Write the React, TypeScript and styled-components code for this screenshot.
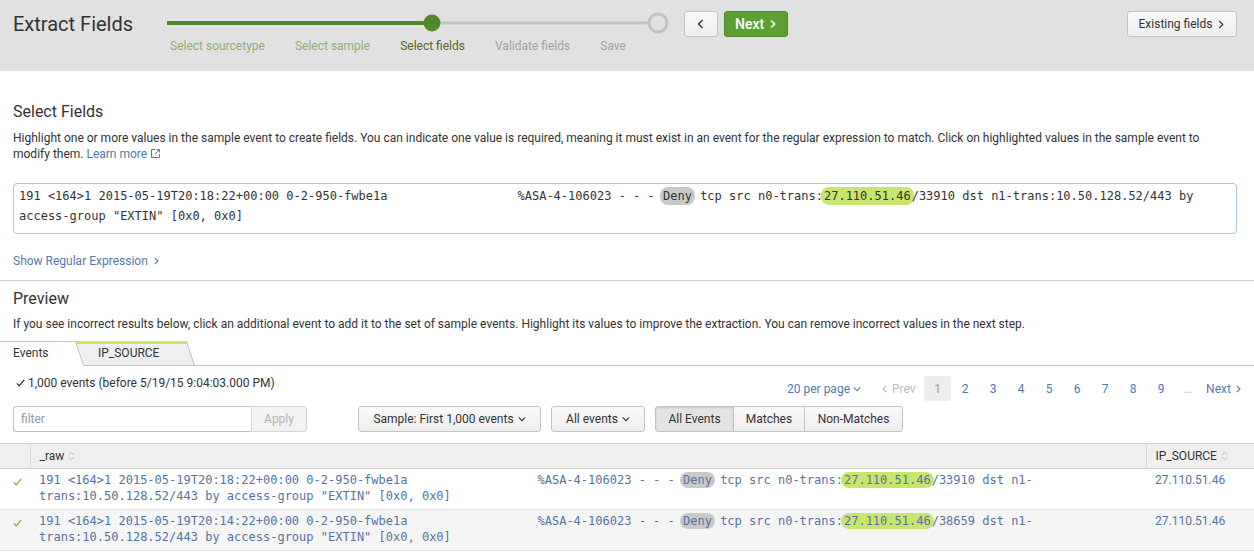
import React from 'react';
import styled, { createGlobalStyle, css } from 'styled-components';

const GlobalStyle = createGlobalStyle`
  html, body { margin: 0; padding: 0; background: #fff; }
  body {
    font-family: Roboto, "Liberation Sans", Arial, sans-serif;
    font-size: 12px;
    color: #333;
  }
  * { box-sizing: border-box; }
`;

const BLUE = '#5379af';
const MONO = '"DejaVu Sans Mono", "Liberation Mono", monospace';

const Header = styled.header`
  display: flex;
  align-items: flex-start;
  height: 71px;
  padding: 11px 17px 0 13px;
  background: #e1e1e1;
`;
const Title = styled.h1`
  flex: none;
  width: 154px;
  margin: 0;
  font-size: 20px;
  font-weight: 400;
  line-height: 26px;
  color: #333;
`;
const Stepper = styled.div`
  flex: none;
  width: 503px;
  display: flex;
  flex-direction: column;
`;
const StepLabels = styled.div`
  display: flex;
  gap: 30px;
  padding-left: 3px;
  margin-top: 4px;
`;
const StepLabel = styled.span<{ state: 'done' | 'current' | 'todo' }>`
  font-size: 12px;
  line-height: 14px;
  color: ${({ state }) =>
    state === 'done' ? '#8fae7c' : state === 'current' ? '#56652f' : '#a3a3a3'};
`;
const NavGroup = styled.div`
  display: flex;
  gap: 6px;
  margin-left: 14px;
`;
const Button = styled.button<{ primary?: boolean; w?: number; pressed?: boolean }>`
  display: inline-flex;
  align-items: center;
  justify-content: center;
  gap: 4px;
  height: 26px;
  width: ${({ w }) => (w ? `${w}px` : 'auto')};
  padding: 0 10px;
  border: 1px solid #c3c3c3;
  border-radius: 3px;
  background: linear-gradient(#f9f9f9, #eeeeee);
  color: #333;
  font-family: inherit;
  font-size: 12px;
  cursor: pointer;
  ${({ primary }) =>
    primary &&
    css`
      background: #5c9f33;
      border-color: #4d8a28;
      color: #fff;
      font-size: 14px;
      font-weight: 500;
    `}
  ${({ pressed }) =>
    pressed &&
    css`
      background: #e3e3e3;
      box-shadow: inset 0 1px 2px rgba(0, 0, 0, 0.12);
    `}
`;
const RightButton = styled(Button)`
  margin-left: auto;
`;
const SpacedButton = styled(Button)<{ gapLeft: number }>`
  margin-left: ${({ gapLeft }) => gapLeft}px;
`;

const Main = styled.section`
  padding: 30px 17px 11px 13px;
`;
const H2 = styled.h2`
  margin: 0;
  font-size: 16px;
  font-weight: 400;
  line-height: 22px;
  color: #333;
`;
const Desc = styled.p<{ mt: number }>`
  margin: ${({ mt }) => mt}px 0 0;
  font-size: 12px;
  line-height: 16px;
  color: #333;
`;
const Link = styled.a`
  color: ${BLUE};
  text-decoration: none;
`;
const LinkIcon = styled.span`
  display: inline-block;
  margin-left: 4px;
  line-height: 0;
  vertical-align: 0;
`;
const EventBox = styled.div`
  margin-top: 21px;
  padding: 2px 5px 7px 5px;
  border: 1px solid #a9c6e6;
  border-radius: 4px;
  font-family: ${MONO};
  font-size: 12px;
  line-height: 20px;
  white-space: pre-wrap;
  color: #333;
`;
const Mark = styled.span<{ kind: 'grey' | 'green'; tight?: boolean }>`
  padding: ${({ tight }) => (tight ? '1px 3px' : '2px 3px')};
  margin: 0 -2px;
  border-radius: 8px;
  background: ${({ kind }) => (kind === 'grey' ? '#c9c9c9' : '#c8e56d')};
`;
const RegexLink = styled(Link)`
  display: inline-flex;
  align-items: center;
  gap: 4px;
  margin-top: 19px;
  line-height: 16px;
`;

const PreviewSection = styled.section`
  border-top: 1px solid #cfcfcf;
  padding-top: 7px;
`;
const PreviewHead = styled.div`
  padding: 0 13px;
`;
const TabBar = styled.div`
  display: flex;
  align-items: flex-end;
  height: 25px;
  margin-top: 9px;
`;
const ActiveTab = styled.div`
  width: 75px;
  height: 25px;
  border-top: 1px solid #c3c3c3;
  padding-left: 13px;
  line-height: 23px;
  font-size: 12px;
  color: #333;
`;
const FieldTab = styled.div`
  position: relative;
  width: 120px;
  height: 25px;
  padding-left: 23px;
  line-height: 24px;
  font-size: 12px;
  color: #333;
  svg {
    position: absolute;
    left: 0;
    top: 0;
  }
  span {
    position: relative;
  }
`;
const TabFill = styled.div`
  flex: 1;
  border-bottom: 1px solid #c3c3c3;
`;

const StatusRow = styled.div`
  display: flex;
  align-items: flex-start;
  padding: 0 7px 0 16px;
`;
const Count = styled.div`
  display: flex;
  align-items: center;
  gap: 3px;
  margin-top: 9px;
  line-height: 16px;
`;
const Pager = styled.div`
  display: flex;
  align-items: center;
  margin: 10px 0 0 auto;
`;
const PageItem = styled.span<{ active?: boolean; muted?: boolean; w?: number }>`
  display: inline-flex;
  align-items: center;
  justify-content: center;
  gap: 3px;
  height: 25px;
  min-width: ${({ w }) => (w ? `${w}px` : '28px')};
  border-radius: 2px;
  color: ${({ muted }) => (muted ? '#bbbbbb' : BLUE)};
  ${({ active }) =>
    active &&
    css`
      background: #eeeeee;
      color: #9a9a9a;
    `}
`;
const PerPage = styled(PageItem)`
  justify-content: flex-start;
  margin-right: 20px;
`;
const PrevItem = styled(PageItem)`
  justify-content: flex-start;
`;

const Controls = styled.div`
  display: flex;
  align-items: center;
  margin-top: 5px;
  padding: 0 13px;
`;
const FilterGroup = styled.div`
  display: flex;
  height: 26px;
`;
const FilterInput = styled.input`
  width: 238px;
  height: 26px;
  padding: 0 7px;
  border: 1px solid #c3c3c3;
  border-right: none;
  border-radius: 3px 0 0 3px;
  font-family: inherit;
  font-size: 12px;
  outline: none;
  &::placeholder {
    color: #999;
  }
`;
const ApplyButton = styled.button`
  width: 56px;
  height: 26px;
  border: 1px solid #d6d6d6;
  border-radius: 0 3px 3px 0;
  background: #f2f2f2;
  color: #b5b5b5;
  font-family: inherit;
  font-size: 12px;
`;
const Segmented = styled.div`
  display: flex;
  margin-left: 10px;
  ${Button} {
    border-radius: 0;
    margin-left: -1px;
  }
  ${Button}:first-child {
    border-radius: 3px 0 0 3px;
    margin-left: 0;
  }
  ${Button}:last-child {
    border-radius: 0 3px 3px 0;
  }
`;

const Table = styled.table`
  width: 100%;
  margin-top: 11px;
  border-collapse: collapse;
  table-layout: fixed;
`;
const Th = styled.th<{ w?: number }>`
  width: ${({ w }) => (w ? `${w}px` : 'auto')};
  height: 25px;
  padding: 0 9px;
  border-top: 1px solid #cfcfcf;
  border-bottom: 1px solid #cfcfcf;
  border-left: 1px solid #d8d8d8;
  background: #efefef;
  text-align: left;
  font-weight: 400;
  font-size: 12px;
  color: #333;
  &:first-child {
    border-left: none;
  }
`;
const SortLabel = styled.span`
  display: inline-flex;
  align-items: center;
  gap: 4px;
`;
const Tr = styled.tr<{ striped?: boolean }>`
  background: ${({ striped }) => (striped ? '#f5f5f5' : '#fff')};
  border-bottom: 1px solid #e0e0e0;
`;
const Td = styled.td<{ mono?: boolean }>`
  padding: 3px 9px 5px;
  vertical-align: top;
  line-height: 16px;
  font-size: 12px;
  color: #5573a2;
  font-family: ${({ mono }) => (mono ? MONO : 'inherit')};
  white-space: ${({ mono }) => (mono ? 'pre-wrap' : 'normal')};
`;
const CheckCell = styled.td`
  padding: 6px 0 0 13px;
  vertical-align: top;
`;

const Chevron = ({ dir, size = 8, w = 1.4 }: { dir: 'left' | 'right' | 'down'; size?: number; w?: number }) => {
  const d = dir === 'right' ? 'M3.5 1l4 4-4 4' : dir === 'left' ? 'M6.5 1l-4 4 4 4' : 'M1 3l4 4 4-4';
  return (
    <svg width={size} height={size} viewBox="0 0 10 10" fill="none" stroke="currentColor" strokeWidth={w}>
      <path d={d} />
    </svg>
  );
};

const SortIcon = () => (
  <svg width="7" height="10" viewBox="0 0 7 10" fill="none" stroke="#b9b9b9" strokeWidth="1">
    <path d="M1 4L3.5 1.5 6 4M1 6l2.5 2.5L6 6" />
  </svg>
);

const Check = ({ color = '#8fa63f' }: { color?: string }) => (
  <svg width="9" height="8" viewBox="0 0 9 8" fill="none" stroke={color} strokeWidth="1.3">
    <path d="M0.8 4.4l2.4 2.4L8.2 0.8" />
  </svg>
);

const ExternalIcon = () => (
  <svg width="9" height="9" viewBox="0 0 9 9" fill="none" stroke={BLUE} strokeWidth="1">
    <path d="M4 0.5H0.5v8h8V5" />
    <path d="M5.5 0.5h3v3M8.5 0.5L4 5" />
  </svg>
);

const StepTrack = () => (
  <svg width="503" height="24" viewBox="0 0 503 24">
    <line x1="0" y1="12" x2="265" y2="12" stroke="#4e8a2b" strokeWidth="4" />
    <line x1="265" y1="12" x2="482" y2="12" stroke="#c3c3c3" strokeWidth="3" />
    <circle cx="265" cy="12" r="8.5" fill="#4e8a2b" />
    <circle cx="491" cy="12" r="9" fill="#e1e1e1" stroke="#c3c3c3" strokeWidth="3" />
  </svg>
);

const TabShape = () => (
  <svg width="120" height="25" viewBox="0 0 120 25">
    <polygon points="0.5,0.5 111.5,0.5 119.5,24.5 8.5,24.5" fill="#efefef" stroke="#c3c3c3" />
    <line x1="1" y1="1.5" x2="111.8" y2="1.5" stroke="#c8e56d" strokeWidth="3" />
  </svg>
);

const steps: { label: string; state: 'done' | 'current' | 'todo' }[] = [
  { label: 'Select sourcetype', state: 'done' },
  { label: 'Select sample', state: 'done' },
  { label: 'Select fields', state: 'current' },
  { label: 'Validate fields', state: 'todo' },
  { label: 'Save', state: 'todo' },
];

const HEAD = '191 <164>1 2015-05-19T20:18:22+00:00 0-2-950-fwbe1a' + ' '.repeat(18) + '%ASA-4-106023 - - - ';

const rows = [
  { time: '20:18:22', port: '33910' },
  { time: '20:14:22', port: '38659' },
];

const RawEvent = ({ time, port, tight }: { time: string; port: string; tight?: boolean }) => (
  <>
    {HEAD.replace('20:18:22', time)}
    <Mark kind="grey" tight={tight}>Deny</Mark>
    {' tcp src n0-trans:'}
    <Mark kind="green" tight={tight}>27.110.51.46</Mark>
    {`/${port} dst n1-trans:10.50.128.52/443 by access-group "EXTIN" [0x0, 0x0]`}
  </>
);

export default function App() {
  return (
    <>
      <GlobalStyle />
      <Header>
        <Title>Extract Fields</Title>
        <Stepper>
          <StepTrack />
          <StepLabels>
            {steps.map((s) => (
              <StepLabel key={s.label} state={s.state}>
                {s.label}
              </StepLabel>
            ))}
          </StepLabels>
        </Stepper>
        <NavGroup>
          <Button w={34}>
            <Chevron dir="left" size={10} />
          </Button>
          <Button primary w={64}>
            Next <Chevron dir="right" size={10} w={1.8} />
          </Button>
        </NavGroup>
        <RightButton w={110}>
          Existing fields <Chevron dir="right" size={9} />
        </RightButton>
      </Header>

      <Main>
        <H2>Select Fields</H2>
        <Desc mt={7}>
          Highlight one or more values in the sample event to create fields. You can indicate one value is required,
          meaning it must exist in an event for the regular expression to match. Click on highlighted values in the
          sample event to modify them.{' '}
          <Link href="#">
            Learn more
            <LinkIcon>
              <ExternalIcon />
            </LinkIcon>
          </Link>
        </Desc>
        <EventBox>
          <RawEvent time="20:18:22" port="33910" />
        </EventBox>
        <RegexLink href="#">
          Show Regular Expression <Chevron dir="right" size={8} />
        </RegexLink>
      </Main>

      <PreviewSection>
        <PreviewHead>
          <H2>Preview</H2>
          <Desc mt={6}>
            If you see incorrect results below, click an additional event to add it to the set of sample events.
            Highlight its values to improve the extraction. You can remove incorrect values in the next step.
          </Desc>
        </PreviewHead>
        <TabBar>
          <ActiveTab>Events</ActiveTab>
          <FieldTab>
            <TabShape />
            <span>IP_SOURCE</span>
          </FieldTab>
          <TabFill />
        </TabBar>

        <StatusRow>
          <Count>
            <Check color="#333" /> 1,000 events (before 5/19/15 9:04:03.000 PM)
          </Count>
          <Pager>
            <PerPage w={10}>
              20 per page <Chevron dir="down" size={8} />
            </PerPage>
            <PrevItem muted w={43}>
              <Chevron dir="left" size={8} /> Prev
            </PrevItem>
            <PageItem active w={27}>1</PageItem>
            {[2, 3, 4, 5, 6, 7, 8, 9].map((n) => (
              <PageItem key={n}>{n}</PageItem>
            ))}
            <PageItem muted w={26}>…</PageItem>
            <PageItem w={46}>
              Next <Chevron dir="right" size={8} />
            </PageItem>
          </Pager>
        </StatusRow>

        <Controls>
          <FilterGroup>
            <FilterInput placeholder="filter" />
            <ApplyButton>Apply</ApplyButton>
          </FilterGroup>
          <SpacedButton w={183} gapLeft={51}>
            Sample: First 1,000 events <Chevron dir="down" size={8} />
          </SpacedButton>
          <SpacedButton w={94} gapLeft={10}>
            All events <Chevron dir="down" size={8} />
          </SpacedButton>
          <Segmented>
            <Button pressed w={79}>All Events</Button>
            <Button w={72}>Matches</Button>
            <Button w={99}>Non-Matches</Button>
          </Segmented>
        </Controls>

        <Table>
          <thead>
            <tr>
              <Th w={30} />
              <Th>
                <SortLabel>
                  _raw <SortIcon />
                </SortLabel>
              </Th>
              <Th w={108}>
                <SortLabel>
                  IP_SOURCE <SortIcon />
                </SortLabel>
              </Th>
            </tr>
          </thead>
          <tbody>
            {rows.map((r, i) => (
              <Tr key={r.time} striped={i % 2 === 1}>
                <CheckCell>
                  <Check />
                </CheckCell>
                <Td mono>
                  <RawEvent time={r.time} port={r.port} tight />
                </Td>
                <Td>27.110.51.46</Td>
              </Tr>
            ))}
          </tbody>
        </Table>
      </PreviewSection>
    </>
  );
}
